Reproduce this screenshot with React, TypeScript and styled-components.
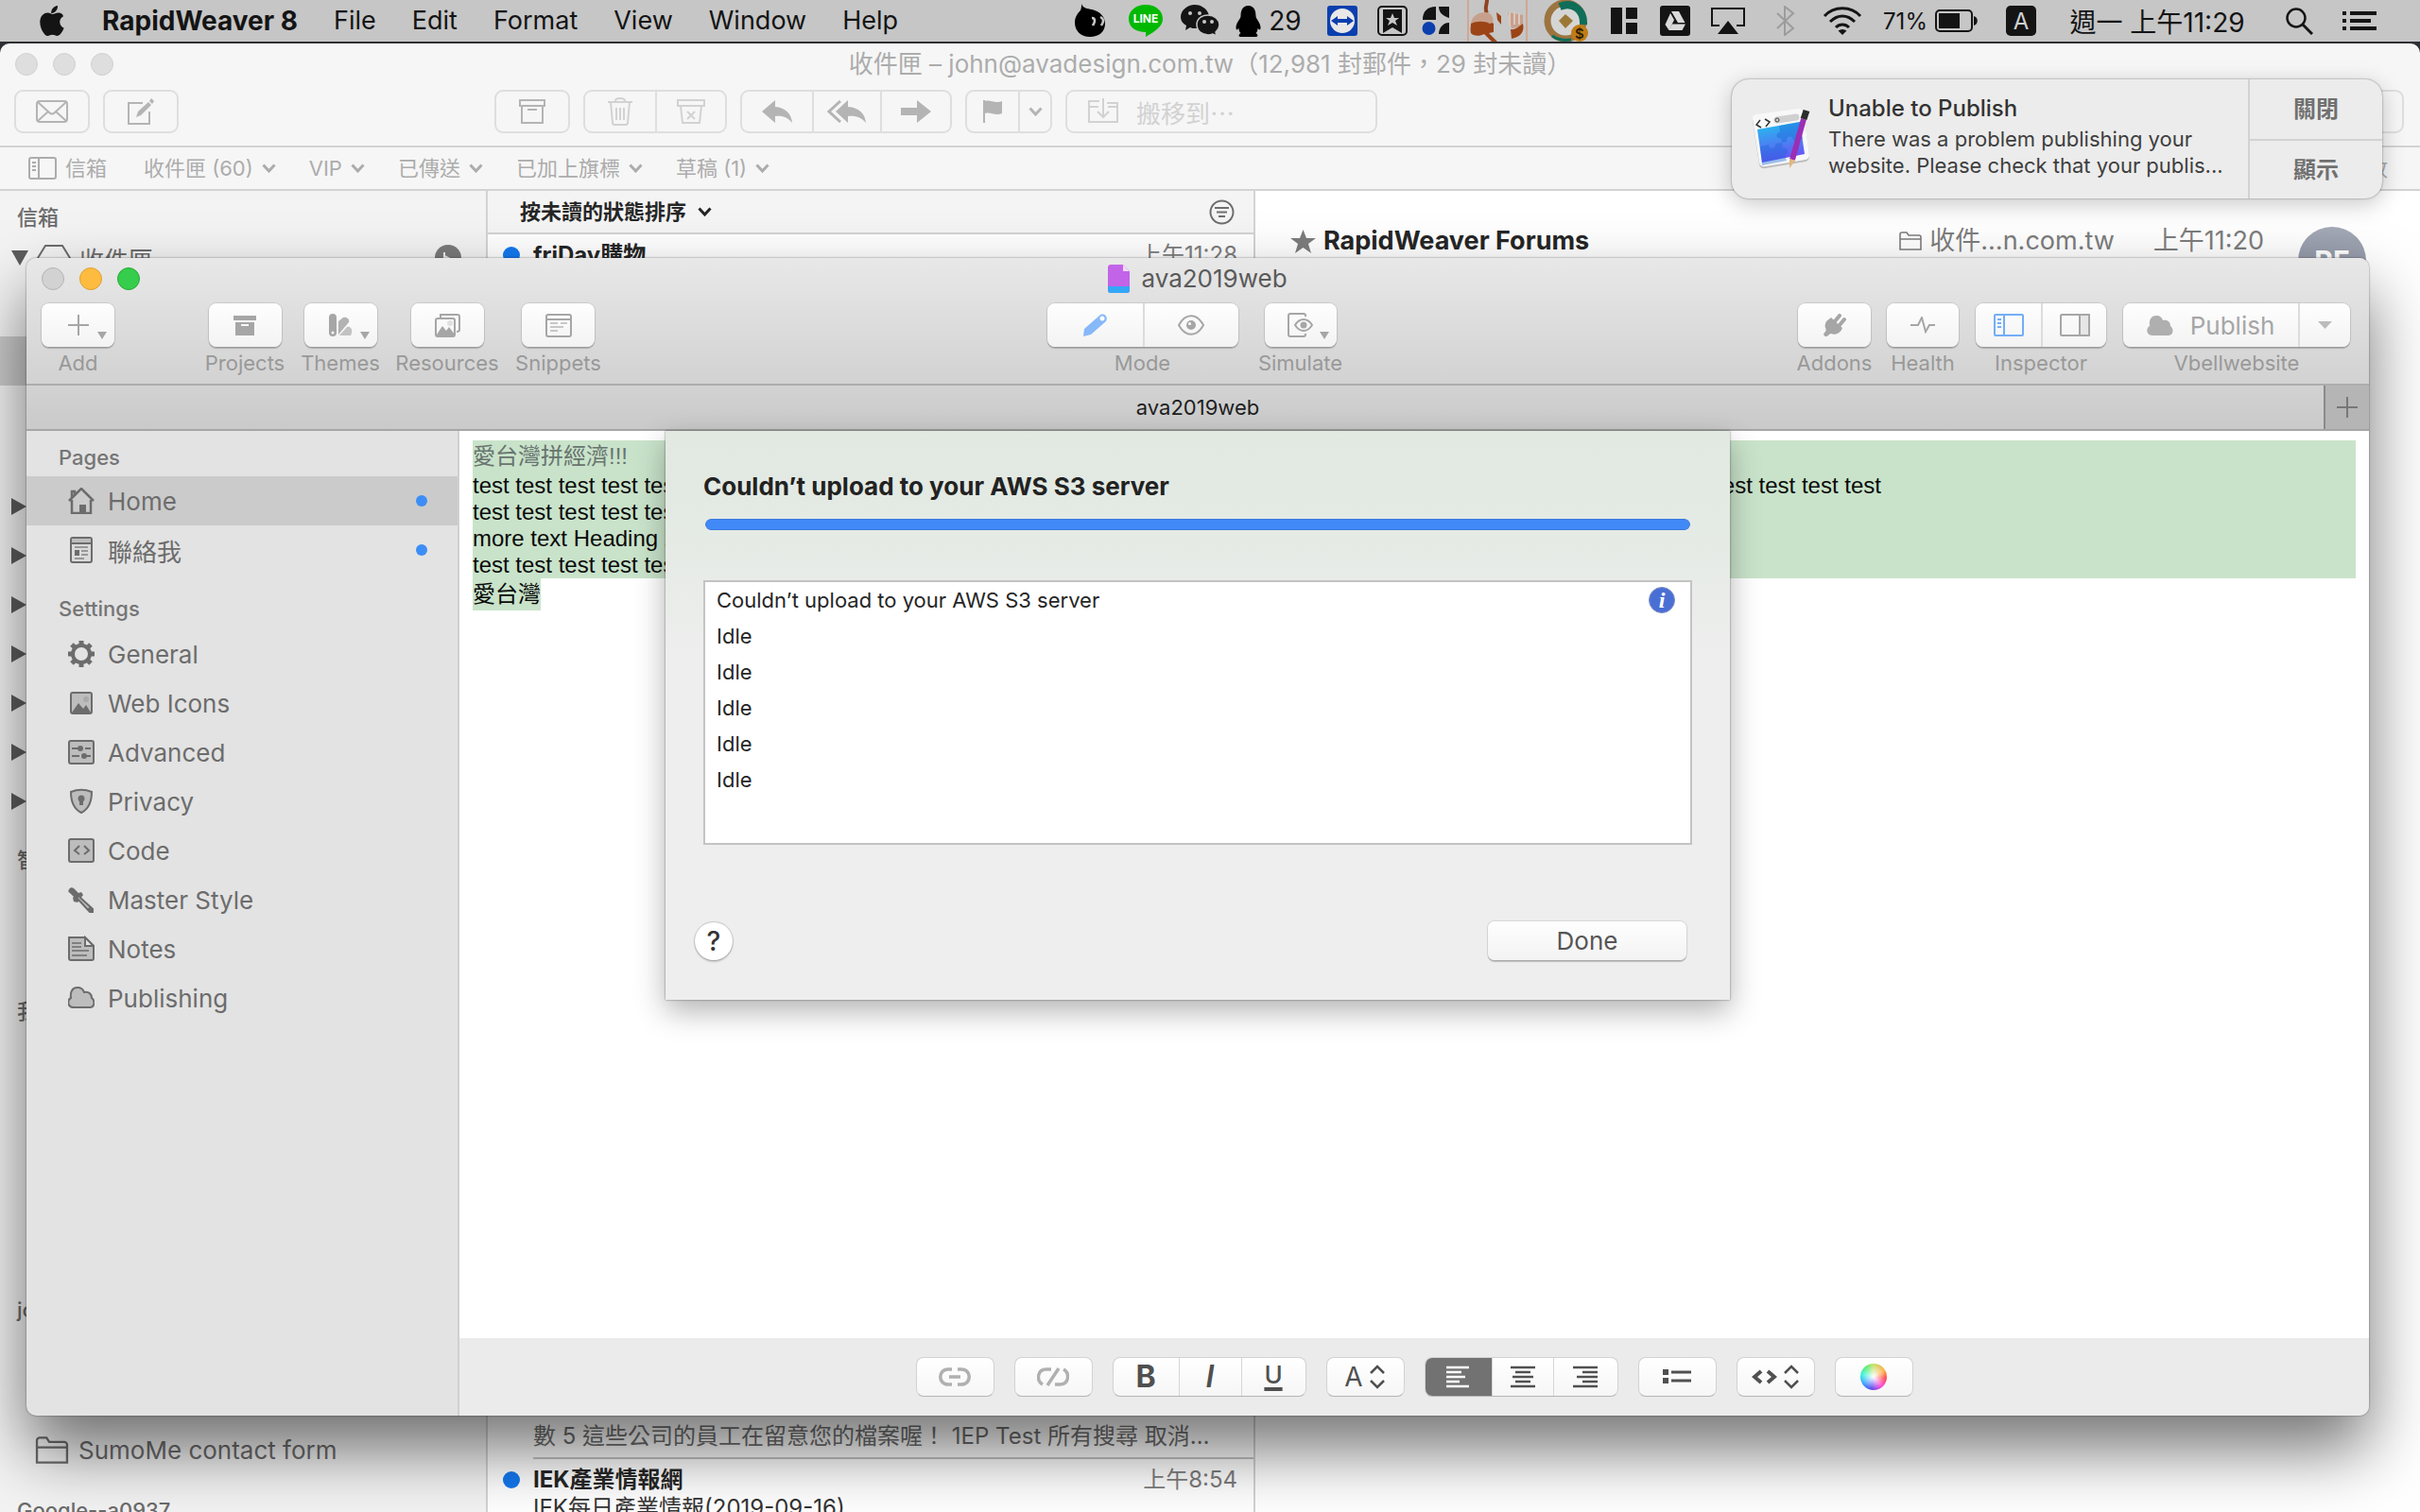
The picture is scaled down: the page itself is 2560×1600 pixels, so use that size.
import React from "react";
import styled, { createGlobalStyle, css } from "styled-components";

const ui = `Inter, "Noto Sans CJK TC", sans-serif`;

const GlobalStyle = createGlobalStyle`
  *, *::before, *::after { box-sizing: border-box; }
  body { margin: 0; font-family: ${ui}; overflow: hidden; background: #2e2f33; }
  button, input { font-family: inherit; margin: 0; }
  button { padding: 0; border: 0; background: none; color: inherit; }
  h1, h2, h3, p, ul { margin: 0; padding: 0; font-weight: inherit; font-size: inherit; }
  ul { list-style: none; }
  svg { display: block; flex: none; }
`;

/* ---------- Desktop and menu bar ---------- */

const Desktop = styled.div`
  position: relative;
  height: 100vh;
  overflow: hidden;
  display: flex;
  flex-direction: column;
  gap: 2px;
  background: #2e2f33;
  white-space: nowrap;
`;

const MenuBar = styled.header`
  flex: none;
  height: 44px;
  display: flex;
  align-items: center;
  padding: 0 36px 0 42px;
  background: #c6c6c6;
  color: #141414;
`;

const Menus = styled.nav`
  display: flex;
  align-items: center;
  gap: 38px;
`;

const MenuTitle = styled.button<{ $strong?: boolean }>`
  font-size: ${(p) => (p.$strong ? 28 : 27)}px;
  line-height: 44px;
  font-weight: ${(p) => (p.$strong ? 700 : 400)};
`;

const Status = styled.div`
  display: flex;
  align-items: center;
  margin-left: auto;
`;

const StatusItem = styled.button<{ $w: number }>`
  width: ${(p) => p.$w}px;
  height: 44px;
  display: flex;
  align-items: center;
  justify-content: center;
  gap: 8px;
  font-size: 28px;
`;

const Small = styled.span`
  font-size: 24px;
`;

/* ---------- Mail window ---------- */

const MailWindow = styled.main`
  flex: 1;
  min-height: 0;
  display: flex;
  flex-direction: column;
  background: #f6f6f6;
  border-radius: 10px 10px 0 0;
  overflow: hidden;
`;

const TitleRow = styled.div`
  flex: none;
  height: 44px;
  display: grid;
  grid-template-columns: 1fr auto 1fr;
  align-items: center;
  padding: 0 16px;
`;

const Lights = styled.div`
  display: flex;
  gap: 16px;
`;

const Light = styled.button<{ $fill: string; $edge: string }>`
  width: 24px;
  height: 24px;
  border-radius: 50%;
  background: ${(p) => p.$fill};
  border: 1px solid ${(p) => p.$edge};
`;

const WindowTitle = styled.h1<{ $dim?: boolean }>`
  display: flex;
  align-items: center;
  gap: 12px;
  font-size: 26px;
  line-height: 32px;
  color: ${(p) => (p.$dim ? "#acacac" : "#5a5a5a")};
`;

const MailToolbar = styled.div`
  flex: none;
  display: flex;
  gap: 14px;
  padding: 5px 17px 13px 15px;
  border-bottom: 2px solid #d3d3d3;
`;

const MailGroup = styled.div<{ $push?: boolean }>`
  display: flex;
  height: 46px;
  margin-left: ${(p) => (p.$push ? "320px" : "0")};
  border: 2px solid #dedede;
  border-radius: 9px;
  color: #b4b4b4;
`;

const MailButton = styled.button<{ $w: number; $faint?: boolean; $start?: boolean }>`
  width: ${(p) => p.$w}px;
  display: flex;
  align-items: center;
  justify-content: ${(p) => (p.$start ? "flex-start" : "center")};
  gap: 19px;
  padding: ${(p) => (p.$start ? "0 22px" : "0")};
  color: ${(p) => (p.$faint ? "#d2d2d2" : "#b4b4b4")};
  font-size: 26px;
  & + & { border-left: 2px solid #dedede; }
`;

const MailSearch = styled.input`
  width: 400px;
  height: 46px;
  margin-left: auto;
  border: 2px solid #dedede;
  border-radius: 9px;
  background: transparent;
`;

const FavBar = styled.nav`
  flex: none;
  height: 46px;
  display: flex;
  align-items: center;
  gap: 35px;
  padding: 0 34px 0 30px;
  border-bottom: 2px solid #d3d3d3;
`;

const Fav = styled.button<{ $end?: boolean; $first?: boolean }>`
  display: flex;
  align-items: center;
  gap: 9px;
  margin-left: ${(p) => (p.$end ? "auto" : "0")};
  margin-right: ${(p) => (p.$first ? "4px" : "0")};
  color: #acacac;
  font-size: 22px;
  line-height: 30px;
`;

const MailBody = styled.div`
  flex: 1;
  min-height: 0;
  display: grid;
  grid-template-columns: 516px 812px 1fr;
`;

const MailSide = styled.aside`
  border-right: 2px solid #d3d3d3;
  background: #f3f3f3;
  color: #6c6c6c;
  overflow: hidden;
`;

const SideHead = styled.h2`
  height: 45px;
  padding: 12px 18px 0;
  font-size: 22px;
  line-height: 32px;
  font-weight: 500;
`;

const SideRow = styled.div<{ $gap?: number; $on?: boolean; $pad?: number; $small?: boolean }>`
  height: 52px;
  margin-top: ${(p) => p.$gap || 0}px;
  padding: 0 26px 0 ${(p) => (p.$pad === undefined ? 12 : p.$pad)}px;
  display: flex;
  align-items: center;
  gap: 9px;
  font-size: ${(p) => (p.$small ? 22 : 26)}px;
  font-weight: ${(p) => (p.$small ? 500 : 400)};
  background: ${(p) => (p.$on ? "#cbcbcb" : "transparent")};
`;

const Badge = styled.span`
  width: 28px;
  height: 28px;
  margin-left: auto;
  border-radius: 50%;
  display: grid;
  place-items: center;
  background: #7a7a7a;
`;

const MailList = styled.section`
  display: flex;
  flex-direction: column;
  border-right: 2px solid #d3d3d3;
  background: #fff;
  color: #6e6e6e;
  overflow: hidden;
`;

const ListHead = styled.div`
  flex: none;
  height: 46px;
  display: flex;
  align-items: center;
  justify-content: space-between;
  padding: 0 20px 0 34px;
  background: #f4f4f4;
  border-bottom: 2px solid #d3d3d3;
`;

const SortButton = styled.button`
  display: flex;
  align-items: center;
  gap: 12px;
  color: #262626;
  font-size: 22px;
  line-height: 32px;
  font-weight: 600;
`;

const Message = styled.article<{ $gap?: number }>`
  margin-top: ${(p) => p.$gap || 0}px;
  display: grid;
  grid-template-columns: 32px 1fr;
  align-items: center;
  padding-left: 16px;
  font-size: 24px;
  line-height: 30px;
`;

const Preview = styled.p`
  grid-column: 2;
  height: 40px;
  padding-right: 30px;
  line-height: 32px;
  overflow: hidden;
  text-overflow: ellipsis;
  border-bottom: 2px solid #c4c4c4;
`;

const Subject = styled.p`
  grid-column: 2;
  color: #333;
`;

const Sender = styled.h3`
  display: flex;
  justify-content: space-between;
  padding-right: 17px;
  color: #262626;
  font-weight: 700;
`;

const When = styled.time`
  color: #7d7d7d;
  font-weight: 400;
`;

const Unread = styled.i<{ $size: number }>`
  width: ${(p) => p.$size}px;
  height: ${(p) => p.$size}px;
  border-radius: 50%;
  background: #1478f0;
`;

const Reader = styled.section`
  background: #fff;
  overflow: hidden;
`;

const ReaderHead = styled.div`
  display: flex;
  align-items: flex-start;
  padding: 36px 57px 0 37px;
  color: #7d7d7d;
  font-size: 27px;
  line-height: 34px;
`;

const ReaderFrom = styled.h2`
  display: flex;
  align-items: center;
  gap: 8px;
  flex: 1;
  font-weight: 700;
`;

const FromName = styled.span`
  color: #262626;
`;

const ReaderBox = styled.span`
  display: flex;
  align-items: center;
  gap: 8px;
  margin-right: 41px;
`;

const Avatar = styled.span`
  width: 72px;
  height: 72px;
  margin: 2px 0 0 36px;
  border-radius: 50%;
  display: grid;
  place-items: center;
  background: linear-gradient(#a3a9b6, #858a9b);
  color: #fff;
  font-size: 30px;
  font-weight: 700;
`;

/* ---------- RapidWeaver window ---------- */

const AppWindow = styled.section`
  position: absolute;
  left: 28px;
  right: 54px;
  top: 273px;
  bottom: 102px;
  display: flex;
  flex-direction: column;
  border-radius: 10px;
  background: #e3e3e3;
  box-shadow: 0 0 2px rgba(0, 0, 0, 0.55), 0 36px 70px rgba(0, 0, 0, 0.55);
`;

const AppHead = styled.header`
  flex: none;
  border-radius: 10px 10px 0 0;
  border-bottom: 2px solid #adadad;
  background: linear-gradient(#e8e8e8, #d2d2d2);
`;

const Toolbar = styled.div`
  display: grid;
  grid-template-columns: 1fr auto 1fr;
  padding: 4px 20px 9px 16px;
  color: #999;
`;

const ToolSet = styled.div<{ $end?: boolean }>`
  display: flex;
  gap: 17px;
  justify-content: ${(p) => (p.$end ? "flex-end" : "flex-start")};
`;

const Tool = styled.div<{ $w: number; $after?: number }>`
  width: ${(p) => p.$w}px;
  margin-right: ${(p) => p.$after || 0}px;
  display: flex;
  flex-direction: column;
  align-items: center;
  gap: 4px;
  font-size: 22px;
  line-height: 26px;
`;

const face = css`
  background: linear-gradient(#fefefe, #f3f3f3);
  box-shadow: 0 0 1px 1px rgba(0, 0, 0, 0.1), 0 2px 1px rgba(0, 0, 0, 0.2);
`;

const Face = styled.div`
  display: flex;
  height: 46px;
  border-radius: 8px;
  ${face}
`;

const FaceButton = styled.button<{ $w: number }>`
  position: relative;
  width: ${(p) => p.$w}px;
  display: flex;
  align-items: center;
  justify-content: center;
  gap: 18px;
  color: #a6a6a6;
  font-size: 26px;
  & + & { border-left: 2px solid #dcdcdc; }
`;

const MenuMark = styled.span`
  position: absolute;
  right: 8px;
  bottom: 8px;
`;

const TabBar = styled.div`
  flex: none;
  height: 48px;
  display: flex;
  border-bottom: 2px solid #a6a6a6;
  background: linear-gradient(#d2d2d2, #cacaca);
`;

const Tab = styled.button`
  flex: 1;
  padding-left: 48px;
  color: #1e1e1e;
  font-size: 22px;
`;

const NewTab = styled.button`
  width: 48px;
  display: grid;
  place-items: center;
  border-left: 2px solid #8a8a8a;
  background: #b5b5b5;
  color: #777;
`;

const AppBody = styled.div`
  flex: 1;
  min-height: 0;
  display: grid;
  grid-template-columns: 458px 1fr;
`;

const Sidebar = styled.nav`
  border-right: 2px solid #d0d0d0;
  border-radius: 0 0 0 10px;
  color: #6c6c6c;
`;

const Heading = styled.h2<{ $next?: boolean }>`
  height: ${(p) => (p.$next ? 58 : 48)}px;
  padding: ${(p) => (p.$next ? 20 : 12)}px 34px 0;
  font-size: 22px;
  line-height: 32px;
  font-weight: 500;
  color: #757575;
`;

const Item = styled.button<{ $on?: boolean }>`
  width: 100%;
  height: 52px;
  padding: 0 32px 0 44px;
  display: grid;
  grid-template-columns: 28px 1fr 12px;
  align-items: center;
  gap: 14px;
  text-align: left;
  font-size: 26px;
  background: ${(p) => (p.$on ? "#cbcbcb" : "transparent")};
`;

const Changed = styled.i`
  width: 12px;
  height: 12px;
  border-radius: 50%;
  background: #3d8df7;
`;

const EditorPane = styled.div`
  min-width: 0;
  min-height: 0;
  display: flex;
  flex-direction: column;
`;

const Editor = styled.div`
  flex: 1;
  min-height: 0;
  padding: 10px 14px 0;
  background: #fff;
  overflow: hidden;
  color: #0a0a0a;
  font-family: "Liberation Sans", "Noto Sans CJK TC", sans-serif;
  font-size: 24px;
  line-height: 28px;
`;

const Selected = styled.div`
  background: #c9e3ca;
`;

const Banner = styled.p`
  color: #68746f;
  line-height: 34px;
`;

const LastLine = styled.span`
  display: inline-block;
  background: #c9e3ca;
  line-height: 34px;
`;

const FormatBar = styled.div`
  flex: none;
  height: 82px;
  display: flex;
  align-items: center;
  justify-content: center;
  gap: 21px;
  background: #ebebeb;
  border-radius: 0 0 10px 0;
`;

const FormatGroup = styled.div`
  display: flex;
  height: 42px;
  border-radius: 8px;
  overflow: hidden;
  border: 1px solid #d2d2d2;
  border-bottom-color: #b4b4b4;
  background: linear-gradient(#fff, #f6f6f6);
`;

const FormatButton = styled.button<{ $w: number; $on?: boolean; $faint?: boolean }>`
  width: ${(p) => p.$w}px;
  display: flex;
  align-items: center;
  justify-content: center;
  gap: 6px;
  color: ${(p) => (p.$on ? "#fff" : p.$faint ? "#b0b0b0" : "#505050")};
  background: ${(p) => (p.$on ? "#727272" : "transparent")};
  font-size: 28px;
  line-height: 40px;
  & + & { border-left: 1px solid #d6d6d6; }
`;

const Bold = styled.b`
  font-weight: 700;
  font-size: 32px;
`;
const Slant = styled.i`
  font-weight: 600;
  font-size: 32px;
`;
const Under = styled.u`
  font-weight: 500;
  text-decoration-thickness: 4px;
  text-underline-offset: 4px;
  font-size: 26px;
  line-height: 36px;
  align-self: flex-start;
`;

const ColorWheel = styled.span`
  width: 28px;
  height: 28px;
  border-radius: 50%;
  background: radial-gradient(circle, #fff, rgba(255, 255, 255, 0) 65%),
    conic-gradient(#c8e06a, #ffb04a 60deg, #ff4a4a 95deg, #ff4ad8 140deg, #5a4af0 190deg, #3aa0ff 235deg, #3af0e0 280deg, #5af07a 320deg, #c8e06a);
`;

/* ---------- Publishing sheet ---------- */

const Sheet = styled.section`
  position: absolute;
  left: 50%;
  top: 183px;
  width: 1126px;
  height: 602px;
  transform: translateX(-50%);
  display: flex;
  flex-direction: column;
  padding: 42px 40px 42px;
  background: linear-gradient(#e1e9e1, #e4eae4 100px, #eeeeee 240px, #eeeeee);
  box-shadow: 0 0 2px rgba(0, 0, 0, 0.5), 0 12px 30px rgba(0, 0, 0, 0.3);
`;

const SheetTitle = styled.h2`
  font-size: 26px;
  line-height: 34px;
  font-weight: 700;
  color: #222;
`;

const Progress = styled.progress`
  appearance: none;
  display: block;
  width: calc(100% - 4px);
  height: 12px;
  margin: 17px 2px 53px;
  border: 0;
  border-radius: 6px;
  overflow: hidden;
  &::-webkit-progress-bar { background: #ddd; }
  &::-webkit-progress-value { background: #4089f7; border-radius: 6px; border: 1px solid #3a7ade; }
`;

const Log = styled.ul`
  height: 280px;
  border: 2px solid #c3c3c3;
  background: #fff;
  padding: 0 16px 0 12px;
  color: #262626;
  font-size: 22px;
`;

const LogRow = styled.li`
  height: 38px;
  display: flex;
  align-items: center;
  justify-content: space-between;
`;

const InfoButton = styled.button`
  width: 28px;
  height: 28px;
  border-radius: 50%;
  background: #4a6fd4;
  border: 1px solid #7f90c4;
  color: #fff;
  font-family: "Liberation Serif", serif;
  font-style: italic;
  font-weight: 700;
  font-size: 24px;
  line-height: 24px;
`;

const SheetFoot = styled.div`
  display: flex;
  justify-content: space-between;
  align-items: center;
  margin: auto 6px 0 -9px;
`;

const Help = styled.button`
  width: 40px;
  height: 40px;
  border-radius: 50%;
  background: #fff;
  color: #333;
  font-size: 28px;
  font-weight: 500;
  box-shadow: 0 0 1px 1px rgba(0, 0, 0, 0.16), 0 2px 2px rgba(0, 0, 0, 0.16);
`;

const Done = styled.button`
  width: 210px;
  height: 41px;
  border-radius: 7px;
  ${face}
  color: #555;
  font-size: 26px;
`;

/* ---------- Notification ---------- */

const Notice = styled.aside`
  position: absolute;
  top: 84px;
  right: 40px;
  width: 688px;
  height: 126px;
  display: grid;
  grid-template-columns: 1fr 142px;
  border-radius: 18px;
  background: #ececec;
  box-shadow: 0 0 2px rgba(0, 0, 0, 0.5), 0 6px 24px rgba(0, 0, 0, 0.22);
`;

const NoticeMain = styled.div`
  display: flex;
  align-items: center;
  gap: 18px;
  padding-left: 20px;
  min-width: 0;
`;

const NoticeText = styled.div`
  padding-bottom: 8px;
  color: #3e3e3e;
  font-size: 22px;
  line-height: 28px;
`;

const NoticeTitle = styled.h2`
  font-size: 24px;
  line-height: 36px;
  font-weight: 500;
  color: #333;
`;

const NoticeActions = styled.div`
  display: grid;
  grid-template-rows: 1fr 1fr;
  border-left: 2px solid #d2d2d2;
`;

const NoticeButton = styled.button`
  padding-bottom: 4px;
  color: #707070;
  font-size: 24px;
  font-weight: 600;
  & + & { border-top: 2px solid #d2d2d2; }
`;

/* ---------- Drawings ---------- */

type IcoProps = { w: number; h: number; vb?: string; children: React.ReactNode };
const Ico = ({ w, h, vb, children }: IcoProps) => (
  <svg width={w} height={h} viewBox={vb || `0 0 ${w} ${h}`} fill="none" stroke="currentColor" strokeWidth={2} aria-hidden="true">
    {children}
  </svg>
);
const solid = { fill: "currentColor", stroke: "none" };

const Chevron = () => (
  <Ico w={15} h={10}>
    <path d="M1.500 1.500 7.500 8l6-6.500" strokeWidth={3} />
  </Ico>
);
const Down = () => (
  <MenuMark>
    <Ico w={10} h={8}>
      <path d="M0 0h10L5 8z" {...solid} />
    </Ico>
  </MenuMark>
);
const Closed = () => (
  <Ico w={16} h={18}>
    <path d="M0 0l16 9-16 9z" {...solid} fill="#5c5c5c" />
  </Ico>
);
const UpDown = () => (
  <Ico w={18} h={26}>
    <path d="M2 9l7-7 7 7M2 17l7 7 7-7" strokeWidth={2.500} />
  </Ico>
);

const Apple = () => (
  <Ico w={28} h={32} vb="0 0 26 32">
    <path {...solid} d="M18 0c.3 2.200-.6 4.200-1.800 5.600-1.200 1.400-3.100 2.500-5 2.300-.3-2.100.7-4.200 1.900-5.500C14.400 1 16.400.1 18 0zM24 11.200c-.3.200-3.700 2-3.700 6 0 4.700 4.200 6.300 4.300 6.300 0 .1-.7 2.400-2.200 4.600C21 30 19.600 32 17.500 32s-2.700-1.200-5-1.200c-2.400 0-3.200 1.200-5.100 1.200s-3.300-1.800-4.900-4.100C.7 25.200-.7 21.100-.7 17.200c0-6.300 4.200-9.600 8.200-9.600 2.200 0 4 1.400 5.300 1.400 1.300 0 3.400-1.500 5.900-1.500 1 0 4.300.1 5.300 3.700z" />
  </Ico>
);

const Flame = () => (
  <Ico w={34} h={36}>
    <path {...solid} fill="#000" d="M8 0c2 5 6 5 11 6 9 2 14 8 14 15 0 9-7 14-16 14S1 29 1 20C1 14 4 10 7 7 8 5 8 2 8 0z" />
    <path d="M19 15c2 0 3 1 3 3s-1 3-2 5M28 14c2 1 3 2 3 4s-1 3-2 5" stroke="#c6c6c6" strokeWidth={2.500} />
  </Ico>
);
const Line = () => (
  <Ico w={36} h={34}>
    <path {...solid} fill="#00b900" d="M18 0c10 0 18 6 18 15 0 8-8 13-18 19v-5C8 29 0 24 0 15 0 6 8 0 18 0z" />
    <text x="18" y="19" textAnchor="middle" fontSize="12" fontWeight="700" fontFamily={ui} fill="#fff" stroke="none">LINE</text>
  </Ico>
);
const WeChat = () => (
  <Ico w={42} h={34}>
    <path {...solid} d="M15 0c8 0 15 6 15 13S23 25 15 25c-2 0-3 0-5-1l-5 3 1-5C2 20 0 17 0 13 0 6 7 0 15 0z" />
    <path {...solid} stroke="#c6c6c6" strokeWidth={1.500} d="M29 11c7 0 12 5 12 10 0 3-2 6-4 8l1 4-4-2c-2 1-3 1-5 1-7 0-12-5-12-11s5-10 12-10z" />
    <g fill="#c6c6c6" stroke="none"><circle cx="10" cy="9" r="2" /><circle cx="20" cy="9" r="2" /><circle cx="25" cy="18" r="2" /><circle cx="33" cy="18" r="2" /></g>
  </Ico>
);
const Penguin = () => (
  <Ico w={27} h={33}>
    <path {...solid} fill="#000" d="M13.500 0c6 0 8 5 8 11 0 3 5 7 5 12 0 3-1 3-3 1 0 3-1 4-2 5 2 1 3 4 0 4h-16c-3 0-2-3 0-4-1-1-2-2-2-5-2 2-3 2-3-1 0-5 5-9 5-12 0-6 2-11 8-11z" />
  </Ico>
);
const TeamViewer = () => (
  <Ico w={32} h={32}>
    <rect width="32" height="32" rx="3" {...solid} fill="#0b3fae" />
    <circle cx="16" cy="16" r="13" {...solid} fill="#e8e8e8" />
    <path {...solid} fill="#0b3fae" d="M4 16l7-5v3h10v-3l7 5-7 5v-3H11v3z" />
  </Ico>
);
const Bookmark = () => (
  <Ico w={32} h={32}>
    <rect x="1" y="1" width="30" height="30" rx="4" />
    <path {...solid} d="M6 4h20v25l-10-6-10 6z" />
    <path {...solid} fill="#c6c6c6" d="M16 8l2 5h5l-4 3 2 5-5-3-5 3 2-5-4-3h5z" />
  </Ico>
);
const Blocks = () => (
  <Ico w={30} h={32}>
    <path {...solid} d="M1 15C1 6 6 1 15 1v14zM18 1h11v12C23 11 18 8 18 1zM29 18v12H18c0-7 5-12 11-12z" />
    <circle cx="7.500" cy="24" r="7" {...solid} fill="#0b3fae" />
  </Ico>
);
const Bronze = () => (
  <Ico w={64} h={44}>
    <path d="M1 0v44M63 0v44" stroke="#cfa795" />
    <path d="M21 0c0 5-3 9 0 14" stroke="#8f4420" strokeWidth={4} />
    <path {...solid} fill="#c7a08c" d="M4 26c0-9 8-13 15-13 6 0 10 5 8 12L5 27zM43 13l16 3v12l-12 2z" />
    <path {...solid} fill="#9c4416" d="M4 25c6-3 15-3 20 0 2-1 3-1 4 0v9l-5 1 9 9h-6l-8-8c-5 3-12 2-14-1-1-4 0-7 0-10zM31 13l5 4v9l-4-5zM46 31c5 1 10-4 13-6 2 8-2 14-12 16z" />
    <path d="M45 13v15M50 12v14M55 14v12" stroke="#dbc7bd" />
  </Ico>
);
const Coin = () => (
  <Ico w={48} h={44}>
    <circle cx="23" cy="22" r="19" fill="#d5d5d5" stroke="#9b7440" strokeWidth={7} />
    <path d="M17 7c14-6 26 4 25 19" stroke="#0f6e58" strokeWidth={8} />
    <path d="M9 38c7 5 13 5 20 4" stroke="#0f6e58" strokeWidth={3} />
    <path {...solid} fill="#9b7836" d="M23 15l8 7-8 8-7-8z" />
    <circle cx="38" cy="35" r="9" {...solid} fill="#c17c15" />
    <text x="38" y="41" textAnchor="middle" fontSize="15" fontWeight="600" fontFamily={ui} fill="#2b2108" stroke="none">$</text>
  </Ico>
);
const Tiles = () => (
  <Ico w={28} h={28}>
    <path {...solid} d="M0 0h12v28H0zM16 0h12v12H16zM16 16h12v12H16z" />
  </Ico>
);
const Drive = () => (
  <Ico w={32} h={32}>
    <rect width="32" height="32" rx="3" {...solid} />
    <path {...solid} fill="#d8d8d8" d="M12 6h8l6.500 12h-7.500zM11 8l4 7-5.500 11-4-6zM13 19.500h14L23.500 26h-14z" />
  </Ico>
);
const AirPlay = () => (
  <Ico w={36} h={28}>
    <path d="M9 19H1V1h34v18h-8" />
    <path {...solid} d="M18 14l11 14H7z" />
  </Ico>
);
const Bluetooth = () => (
  <Ico w={20} h={32}>
    <path d="M1 8l17 16-9 7V1l9 7L1 24" stroke="#9c9c9c" />
  </Ico>
);
const Wifi = () => (
  <Ico w={42} h={30}>
    <path d="M2 10c10-11 28-11 38 0M8 16c8-8 18-8 26 0M14 22c4-4 10-4 14 0" strokeWidth={3} />
    <path {...solid} d="M16.500 25.500c3-2 6-2 9 0L21 30z" />
  </Ico>
);
const Battery = () => (
  <Ico w={45} h={24}>
    <rect x="1" y="1" width="38" height="22" rx="4" />
    <rect x="4" y="4" width="22" height="16" {...solid} />
    <path {...solid} d="M41 7c5 1 5 9 0 10z" />
  </Ico>
);
const InputSource = () => (
  <Ico w={32} h={32}>
    <rect width="32" height="32" rx="5" {...solid} />
    <text x="16" y="25" textAnchor="middle" fontSize="24" fontFamily={ui} fill="#d0d0d0" stroke="none">A</text>
  </Ico>
);
const Search = () => (
  <Ico w={29} h={29}>
    <circle cx="11" cy="11" r="9.500" strokeWidth={2.500} />
    <path d="M18 18l10 10" strokeWidth={3} />
  </Ico>
);
const ListMenu = () => (
  <Ico w={36} h={20}>
    <path d="M0 2h4M0 10h4M0 18h4M8 2h28M8 10h22M8 18h28" strokeWidth={4} />
  </Ico>
);

const Envelope = () => (
  <Ico w={34} h={24}>
    <rect x="1" y="1" width="32" height="22" rx="3" />
    <path d="M2 2l12 11c2 2 4 2 6 0L32 2M2 22l11-10M32 22L21 12" />
  </Ico>
);
const Compose = () => (
  <Ico w={30} h={28}>
    <path d="M17 5H2v22h22V14" />
    <path {...solid} d="M10 20l2-6L23 4l3 3-11 11zM24 3l2-3 3 3-2 3z" />
  </Ico>
);
const Archive = () => (
  <Ico w={28} h={26}>
    <path d="M1 1h26v6H1zM3 7v18h22V7M9 11h10" />
  </Ico>
);
const Trash = () => (
  <Ico w={26} h={30}>
    <path d="M0 5h26M3 5l2 22c0 1 1 2 2 2h12c1 0 2-1 2-2l2-22M8 4c0-4 10-4 10 0M9 11v13M13 11v13M17 11v13" />
  </Ico>
);
const Junk = () => (
  <Ico w={30} h={26}>
    <path d="M1 1h28v6H1zM4 7l2 18h18l2-18M11 13l8 8M19 13l-8 8" />
  </Ico>
);
const Reply = () => (
  <Ico w={32} h={24}>
    <path {...solid} d="M0 12L14 0v7c11 1 17 7 18 17-5-6-10-8-18-7v7z" />
  </Ico>
);
const ReplyAll = () => (
  <Ico w={42} h={24}>
    <path {...solid} d="M9 12L22 0v7c12 1 18 7 19 17-5-6-11-8-19-7v7z" />
    <path d="M14 1L2 12l12 11" strokeWidth={3} />
  </Ico>
);
const Forward = () => (
  <Ico w={32} h={24}>
    <path {...solid} d="M0 8h17V0l15 12-15 12v-8H0z" />
  </Ico>
);
const Flag = () => (
  <Ico w={20} h={24}>
    <path {...solid} d="M0 0h2v1c6-2 10 3 18 0v13c-8 3-12-2-18 0v10H0z" />
  </Ico>
);
const MoveTo = () => (
  <Ico w={32} h={28}>
    <path d="M12 3H1v22h30V5H20M1 9h10M21 9h10M16 0v20M10 14l6 6 6-6" />
  </Ico>
);
const Panels = () => (
  <Ico w={30} h={24}>
    <rect x="1" y="1" width="28" height="22" rx="2" />
    <path d="M11 1v22M4 6h4M4 10h4M4 14h4" />
  </Ico>
);
const Filter = () => (
  <Ico w={27} h={27}>
    <circle cx="13.500" cy="13.500" r="12" />
    <path d="M6 9h15M8 13.500h11M10 18h7" />
  </Ico>
);
const Inbox = () => (
  <Ico w={36} h={28}>
    <path d="M1 14L9 1h18l8 13v12H1z" />
  </Ico>
);
const Folder = ({ w = 24, h = 20 }: { w?: number; h?: number }) => (
  <Ico w={w} h={h} vb="0 0 24 20">
    <path d="M1 19V3c0-1 1-2 2-2h5l2 3h11c1 0 2 1 2 2v13zM1 8h22" strokeWidth={1.600} />
  </Ico>
);
const Star = () => (
  <Ico w={27} h={25}>
    <path {...solid} d="M13.500 0l3.500 9h10l-8 6 3 10-8.500-6L5 25l3-10-8-6h10z" />
  </Ico>
);

const AppIcon = () => (
  <Ico w={64} h={64}>
    <path {...solid} fill="#bdbdbd" d="M2 13Q1 8 6 7L50 1q5 0 6 4l6 45q0 5-4 6L16 63q-6 1-7-4z" />
    <path {...solid} fill="#f8f8f8" d="M2 11Q1 7 6 6L50 0q5 0 6 4l6 45q0 4-4 5L16 61q-6 1-7-4z" />
    <defs>
      <linearGradient id="page" x1="0" y1="0" x2="0.200" y2="1"><stop stopColor="#1fc4ee" /><stop offset="1" stopColor="#6a52f5" /></linearGradient>
    </defs>
    <path {...solid} fill="url(#page)" d="M7 22L52 14l5 34-45 9z" />
    <path {...solid} fill="#1767d8" opacity="0.400" d="M30 18l22-4 3 18-10 2c0-6-8-6-7 1l-5 1-1-5c-6 2-6-6-1-6zM10 40l9-2c0 6 8 5 7-1l7-1 1 6c6-2 7 5 2 7l2 6-26 5z" />
    <path d="M10 12l-4 5 5 3M15 11l5 3-4 5" stroke="#333" strokeWidth={1.500} />
    <path d="M28 12l20-3" stroke="#d0d0d0" strokeWidth={7} strokeLinecap="round" />
    <circle cx="28" cy="12" r="2" stroke="#444" strokeWidth={1} />
    <path d="M56 11L44 54" stroke="#9a2fb5" strokeWidth={6} />
    <path d="M59 2l-3 9" stroke="#2c2c2c" strokeWidth={7} />
    <path {...solid} fill="#e2b77d" d="M41 53l6 2-6 8z" />
  </Ico>
);

const DocIcon = () => (
  <Ico w={23} h={30}>
    <path {...solid} fill="#c264e8" d="M3 0h13l7 7v20c0 2-1 3-3 3H3c-2 0-3-1-3-3V3c0-2 1-3 3-3z" />
    <path {...solid} fill="#35a7f7" d="M0 23h23v4c0 2-1 3-3 3H3c-2 0-3-1-3-3z" />
    <path {...solid} fill="#efd9f7" d="M16 0l7 7h-7z" />
  </Ico>
);
const Plus = ({ s }: { s: number }) => (
  <Ico w={s} h={s} vb="0 0 22 22">
    <path d="M11 0v22M0 11h22" />
  </Ico>
);
const Box = () => (
  <Ico w={24} h={21}>
    <path {...solid} d="M0 0h24v5H0zM2 7h20v14H2z" />
    <path d="M8 10h8" stroke="#f8f8f8" />
  </Ico>
);
const Swatches = () => (
  <Ico w={26} h={24}>
    <rect x="1" y="0" width="8" height="24" rx="4" {...solid} />
    <path {...solid} opacity="0.850" d="M11 8l5-4c4-1 7 2 6 5L11 22z" />
    <path {...solid} opacity="0.650" d="M12 23l8-9c4-1 7 3 4 9z" />
    <circle cx="5" cy="20" r="1.500" {...solid} fill="#fff" />
  </Ico>
);
const Pictures = () => (
  <Ico w={27} h={25}>
    <path d="M6 4V1h18c1 0 2 1 2 2v14c0 1-1 2-3 2" />
    <rect x="1" y="5" width="20" height="19" rx="2" />
    <path {...solid} d="M2 22l6-9 4 5 3-4 6 8v2H2z" />
    <circle cx="16" cy="10" r="3" {...solid} opacity="0.300" />
  </Ico>
);
const Snippet = () => (
  <Ico w={28} h={25}>
    <rect x="1" y="1" width="26" height="23" rx="2" />
    <path d="M1 6h26" />
    <path d="M5 10h8M16 10h7M5 14h14M5 18h8" opacity="0.600" />
  </Ico>
);
const Pencil = () => (
  <Ico w={25} h={24}>
    <path {...solid} fill="#86b8fa" d="M0 24l1-8L17 2c4-4 10 1 7 6L8 22z" />
    <circle cx="20" cy="5" r="2.500" {...solid} fill="#fff" />
  </Ico>
);
const Eye = () => (
  <Ico w={28} h={22}>
    <path d="M1 11C8-2 20-2 27 11 20 24 8 24 1 11z" />
    <circle cx="14" cy="11" r="5" {...solid} />
    <circle cx="12.500" cy="9.500" r="1.500" {...solid} fill="#fff" />
  </Ico>
);
const PhoneEye = () => (
  <Ico w={27} h={26}>
    <path d="M19 4V3c0-1-1-2-2-2H3C2 1 1 2 1 3v20c0 1 1 2 2 2h14c1 0 2-1 2-2v-1" />
    <path d="M8 13c5-8 13-8 18 0-5 8-13 8-18 0z" />
    <circle cx="17" cy="13" r="3.500" {...solid} />
  </Ico>
);
const Plug = () => (
  <Ico w={25} h={25}>
    <path {...solid} d="M4 8l5-4 12 11c-2 6-8 8-12 6-2 0-3 3-5 3s-4-2-2-4 2-3 1-5 0-5 1-7z" />
    <path d="M13 8l5-6M18 12l5-6" strokeWidth={4} strokeLinecap="round" />
  </Ico>
);
const Pulse = () => (
  <Ico w={26} h={18}>
    <path d="M0 9h8l4-8 4 15 4-7h6" />
  </Ico>
);
const PanelLeft = () => (
  <Ico w={32} h={24}>
    <g stroke="#74aef8"><rect x="1" y="1" width="30" height="22" rx="1" /><path d="M11 1v22M4 6h4M4 10h4M4 14h4" /></g>
  </Ico>
);
const PanelRight = () => (
  <Ico w={32} h={24}>
    <rect x="21" y="1" width="10" height="22" fill="#e6e6e6" />
    <rect x="1" y="1" width="30" height="22" rx="1" />
  </Ico>
);
const cloudPath = "M6 22c-7 0-7-8-3-10C2 5 5 1 10 1c4 0 6 2 7 5 5-1 8 2 8 6 4 3 3 10-2 10z";
const CloudSolid = () => (
  <Ico w={28} h={23}>
    <path {...solid} d={cloudPath} opacity="0.900" />
  </Ico>
);

const fillSoft = "#bdbdbd";
const Home = () => (
  <Ico w={28} h={28}>
    <path d="M1 14L14 1l13 13M4 13v14h20V13M4 11V4h3v4" strokeWidth={2.500} />
    <path {...solid} d="M12 18h7v9h-7z" />
  </Ico>
);
const Page = () => (
  <Ico w={28} h={28}>
    <rect x="3" y="1" width="22" height="26" rx="2" fill="#dadada" />
    <path {...solid} fill={fillSoft} d="M4 2h20v5H4z" />
    <path d="M3 7h22" />
    <path d="M7 11h14M14 15h7M14 19h7M7 23h10" opacity="0.600" />
    <path {...solid} d="M7 14h5v6H7z" />
  </Ico>
);
const Gear = () => (
  <Ico w={28} h={28}>
    <circle cx="14" cy="14" r="9" strokeWidth={4} />
    <g strokeWidth={5}><path d="M14 0v5M14 23v5M0 14h5M23 14h5M4 4l4 4M20 20l4 4M4 24l4-4M20 8l4-4" /></g>
  </Ico>
);
const Photo = () => (
  <Ico w={28} h={28}>
    <rect x="3" y="3" width="22" height="22" rx="2" fill={fillSoft} />
    <path {...solid} d="M4 24l7-10 5 6 3-4 5 8z" />
    <circle cx="19" cy="10" r="3" {...solid} fill="#aaa" />
  </Ico>
);
const Sliders = () => (
  <Ico w={28} h={28}>
    <rect x="1" y="2" width="26" height="24" rx="2" fill={fillSoft} />
    <path d="M4 10h12M18 10h6M4 18h8M15 18h9" />
    <circle cx="13" cy="10" r="3" {...solid} /><circle cx="17" cy="18" r="3" {...solid} />
  </Ico>
);
const Shield = () => (
  <Ico w={28} h={28}>
    <path d="M3 4c7-3 15-3 22 0 0 11-3 18-11 22C6 22 3 15 3 4z" fill={fillSoft} />
    <circle cx="14" cy="11" r="3.500" {...solid} />
    <path {...solid} d="M12 12h4v6h-4z" />
  </Ico>
);
const Brackets = () => (
  <Ico w={28} h={28}>
    <rect x="1" y="2" width="26" height="24" rx="2" fill={fillSoft} />
    <path d="M12 9l-5 5 5 4M17 9l5 5-5 4" />
  </Ico>
);
const Dropper = () => (
  <Ico w={28} h={28}>
    <path {...solid} d="M1 3c2-3 5-2 7 1l3 3 3-1 2 3-6 8-4-1-1-4 1-1-4-4C0 6 0 5 1 3z" />
    <path d="M12 11l14 13v3h-3L10 13" fill={fillSoft} />
    <path {...solid} d="M20 24l4-3 3 3v3h-4z" />
  </Ico>
);
const Note = () => (
  <Ico w={28} h={28}>
    <path d="M1 2h17l9 9v13c0 1-1 2-2 2H3c-1 0-2-1-2-2z" fill={fillSoft} />
    <path d="M18 2v9h9z" fill="#e3e3e3" />
    <path d="M4 8h10M4 12h10M4 16h18M4 21h16" strokeWidth={1.500} />
  </Ico>
);
const Cloud = () => (
  <Ico w={28} h={24}>
    <path d={cloudPath} fill={fillSoft} />
  </Ico>
);

const Link = ({ cut }: { cut?: boolean }) => (
  <Ico w={34} h={20}>
    {cut ? (
      <path d="M15 2h-5C0 2-1 14 6 18M19 18h5c10 0 11-12 4-16M11 19L23 1" strokeWidth={3.500} />
    ) : (
      <path d="M14 2h-4C-1 2-1 18 10 18h4M20 2h4c11 0 11 16 0 16h-4M11 10h12" strokeWidth={3.500} />
    )}
  </Ico>
);
const Align = ({ d }: { d: string }) => (
  <Ico w={26} h={24}>
    <path d={d} strokeWidth={2.500} />
  </Ico>
);
const Bullets = () => (
  <Ico w={30} h={16}>
    <path {...solid} d="M0 0h6v6H0zM0 9h6v6H0z" />
    <path d="M9 3h21M9 12h21" strokeWidth={3} />
  </Ico>
);
const CodeGlyph = () => (
  <Ico w={27} h={16}>
    <path d="M10 2L3 8l7 6M17 2l7 6-7 6" strokeWidth={4} />
  </Ico>
);

/* ---------- Parts ---------- */

const favourites = ["收件匣 (60)", "VIP", "已傳送", "已加上旗標", "草稿 (1)"];

const Mail = () => (
  <MailWindow>
    <TitleRow>
      <Lights>
        {["關閉視窗", "縮小視窗", "放大視窗"].map((n) => (
          <Light key={n} aria-label={n} $fill="#dedede" $edge="#d0d0d0" />
        ))}
      </Lights>
      <WindowTitle $dim>收件匣 – john@avadesign.com.tw（12,981 封郵件，29 封未讀）</WindowTitle>
    </TitleRow>
    <MailToolbar>
      <MailGroup><MailButton $w={76} aria-label="取得郵件"><Envelope /></MailButton></MailGroup>
      <MailGroup><MailButton $w={76} aria-label="新郵件"><Compose /></MailButton></MailGroup>
      <MailGroup $push><MailButton $w={76} aria-label="封存"><Archive /></MailButton></MailGroup>
      <MailGroup>
        <MailButton $w={74} $faint aria-label="刪除"><Trash /></MailButton>
        <MailButton $w={74} $faint aria-label="垃圾郵件"><Junk /></MailButton>
      </MailGroup>
      <MailGroup>
        <MailButton $w={74} aria-label="回覆"><Reply /></MailButton>
        <MailButton $w={72} aria-label="全部回覆"><ReplyAll /></MailButton>
        <MailButton $w={74} aria-label="轉寄"><Forward /></MailButton>
      </MailGroup>
      <MailGroup>
        <MailButton $w={54} aria-label="旗標"><Flag /></MailButton>
        <MailButton $w={34} aria-label="旗標顏色"><Chevron /></MailButton>
      </MailGroup>
      <MailGroup><MailButton $w={326} $faint $start><MoveTo />搬移到⋯</MailButton></MailGroup>
      <MailSearch type="search" aria-label="搜尋" />
    </MailToolbar>
    <FavBar>
      <Fav $first><Panels />信箱</Fav>
      {favourites.map((f) => (
        <Fav key={f}>{f}<Chevron /></Fav>
      ))}
      <Fav $end>放</Fav>
    </FavBar>
    <MailBody>
      <MailSide>
        <SideHead>信箱</SideHead>
        <SideRow>
          <Ico w={18} h={16}><path d="M0 0h18L9 16z" {...solid} fill="#5c5c5c" /></Ico>
          <Inbox />收件匣
          <Badge><Ico w={12} h={12}><path d="M2 0v12M2 4l8 4" stroke="#eee" /></Ico></Badge>
        </SideRow>
        <SideRow $gap={57} $on />
        <SideRow $gap={102}><Closed /></SideRow>
        {[0, 1, 2, 3, 4, 5].map((n) => (
          <SideRow key={n}><Closed /></SideRow>
        ))}
        <SideRow $gap={8} $pad={18} $small>智</SideRow>
        <SideRow $gap={108} $pad={18} $small>我</SideRow>
        <SideRow $gap={266} $pad={18} $small>jo</SideRow>
        <SideRow $gap={96} $pad={36}><Folder w={38} h={29} />SumoMe contact form</SideRow>
        <SideRow $gap={12} $pad={18} $small>Google--a0937</SideRow>
      </MailSide>
      <MailList>
        <ListHead>
          <SortButton>按未讀的狀態排序<Chevron /></SortButton>
          <Filter />
        </ListHead>
        <Message $gap={7}>
          <Unread $size={18} />
          <Sender>friDay購物<When>上午11:28</When></Sender>
        </Message>
        <Message $gap={1219}>
          <Preview>數 5 這些公司的員工在留意您的檔案喔！ 1EP Test 所有搜尋 取消…</Preview>
        </Message>
        <Message $gap={7}>
          <Unread $size={18} />
          <Sender>IEK產業情報網<When>上午8:54</When></Sender>
          <Subject>IEK每日產業情報(2019-09-16)</Subject>
        </Message>
      </MailList>
      <Reader>
        <ReaderHead>
          <ReaderFrom><Star /><FromName>RapidWeaver Forums</FromName></ReaderFrom>
          <ReaderBox><Folder />收件…n.com.tw</ReaderBox>
          <time>上午11:20</time>
          <Avatar>RF</Avatar>
        </ReaderHead>
      </Reader>
    </MailBody>
  </MailWindow>
);

const settings: [string, React.ReactNode][] = [
  ["General", <Gear />],
  ["Web Icons", <Photo />],
  ["Advanced", <Sliders />],
  ["Privacy", <Shield />],
  ["Code", <Brackets />],
  ["Master Style", <Dropper />],
  ["Notes", <Note />],
  ["Publishing", <Cloud />],
];

const tests = (n: number) => Array(n).fill("test").join(" ");

const RapidWeaver = () => (
  <AppWindow>
    <AppHead>
      <TitleRow>
        <Lights>
          <Light aria-label="Close" $fill="#d2d2d2" $edge="#b4b4b4" />
          <Light aria-label="Minimize" $fill="#fdbc40" $edge="#e0a030" />
          <Light aria-label="Zoom" $fill="#35cd4b" $edge="#27a937" />
        </Lights>
        <WindowTitle><DocIcon />ava2019web</WindowTitle>
      </TitleRow>
      <Toolbar>
        <ToolSet>
          <Tool $w={77} $after={78}>
            <Face><FaceButton $w={77} aria-label="Add page"><Plus s={22} /><Down /></FaceButton></Face>Add
          </Tool>
          <Tool $w={86}><Face><FaceButton $w={77} aria-label="Open projects"><Box /></FaceButton></Face>Projects</Tool>
          <Tool $w={82}><Face><FaceButton $w={77} aria-label="Open themes"><Swatches /><Down /></FaceButton></Face>Themes</Tool>
          <Tool $w={110}><Face><FaceButton $w={77} aria-label="Open resources"><Pictures /></FaceButton></Face>Resources</Tool>
          <Tool $w={91}><Face><FaceButton $w={77} aria-label="Open snippets"><Snippet /></FaceButton></Face>Snippets</Tool>
        </ToolSet>
        <ToolSet>
          <Tool $w={204}>
            <Face>
              <FaceButton $w={101} aria-label="Edit mode"><Pencil /></FaceButton>
              <FaceButton $w={101} aria-label="Preview mode"><Eye /></FaceButton>
            </Face>
            Mode
          </Tool>
          <Tool $w={96}><Face><FaceButton $w={76} aria-label="Simulate device"><PhoneEye /><Down /></FaceButton></Face>Simulate</Tool>
        </ToolSet>
        <ToolSet $end>
          <Tool $w={77}><Face><FaceButton $w={77} aria-label="Open addons"><Plug /></FaceButton></Face>Addons</Tool>
          <Tool $w={76}><Face><FaceButton $w={76} aria-label="Check health"><Pulse /></FaceButton></Face>Health</Tool>
          <Tool $w={140}>
            <Face>
              <FaceButton $w={69} aria-label="Left panel"><PanelLeft /></FaceButton>
              <FaceButton $w={69} aria-label="Right panel"><PanelRight /></FaceButton>
            </Face>
            Inspector
          </Tool>
          <Tool $w={240}>
            <Face>
              <FaceButton $w={185}><CloudSolid />Publish</FaceButton>
              <FaceButton $w={55} aria-label="Publish options"><Ico w={15} h={8}><path d="M0 0h15L7.500 8z" {...solid} fill="#bbb" /></Ico></FaceButton>
            </Face>
            Vbellwebsite
          </Tool>
        </ToolSet>
      </Toolbar>
    </AppHead>
    <TabBar>
      <Tab>ava2019web</Tab>
      <NewTab aria-label="New tab"><Plus s={22} /></NewTab>
    </TabBar>
    <AppBody>
      <Sidebar>
        <Heading>Pages</Heading>
        <Item $on><Home />Home<Changed /></Item>
        <Item><Page />聯絡我<Changed /></Item>
        <Heading $next>Settings</Heading>
        {settings.map(([name, icon]) => (
          <Item key={name}>{icon}{name}</Item>
        ))}
      </Sidebar>
      <EditorPane>
        <Editor>
          <Selected>
            <Banner>愛台灣拼經濟!!!</Banner>
            <p>{tests(33)}</p>
            <p>{tests(14)}</p>
            <p>more text Heading 2</p>
            <p>{tests(14)}</p>
          </Selected>
          <LastLine>愛台灣</LastLine>
        </Editor>
        <FormatBar>
          <FormatGroup><FormatButton $w={81} $faint aria-label="Add link"><Link /></FormatButton></FormatGroup>
          <FormatGroup><FormatButton $w={81} $faint aria-label="Remove link"><Link cut /></FormatButton></FormatGroup>
          <FormatGroup>
            <FormatButton $w={69}><Bold>B</Bold></FormatButton>
            <FormatButton $w={66}><Slant>I</Slant></FormatButton>
            <FormatButton $w={68}><Under>U</Under></FormatButton>
          </FormatGroup>
          <FormatGroup><FormatButton $w={81}>A<UpDown /></FormatButton></FormatGroup>
          <FormatGroup>
            <FormatButton $w={70} $on aria-label="Align left"><Align d="M0 2h24M0 7h16M0 12h20M0 17h14M0 22h24" /></FormatButton>
            <FormatButton $w={65} aria-label="Align center"><Align d="M0 2h26M5 7h16M2 12h22M5 17h16M0 22h26" /></FormatButton>
            <FormatButton $w={68} aria-label="Align right"><Align d="M0 2h26M10 7h16M4 12h22M10 17h16M0 22h26" /></FormatButton>
          </FormatGroup>
          <FormatGroup><FormatButton $w={81} aria-label="List"><Bullets /></FormatButton></FormatGroup>
          <FormatGroup><FormatButton $w={81} aria-label="Code style"><CodeGlyph /><UpDown /></FormatButton></FormatGroup>
          <FormatGroup><FormatButton $w={81} aria-label="Text colour"><ColorWheel /></FormatButton></FormatGroup>
        </FormatBar>
      </EditorPane>
    </AppBody>
    <Sheet role="dialog" aria-labelledby="sheet-title">
      <SheetTitle id="sheet-title">Couldn’t upload to your AWS S3 server</SheetTitle>
      <Progress value={1} max={1} aria-labelledby="sheet-title" />
      <Log>
        <LogRow>Couldn’t upload to your AWS S3 server<InfoButton aria-label="Details">i</InfoButton></LogRow>
        {[1, 2, 3, 4, 5].map((n) => (
          <LogRow key={n}>Idle</LogRow>
        ))}
      </Log>
      <SheetFoot>
        <Help>?</Help>
        <Done>Done</Done>
      </SheetFoot>
    </Sheet>
  </AppWindow>
);

export default function App() {
  return (
    <>
      <GlobalStyle />
      <Desktop>
        <MenuBar>
          <Menus>
            <MenuTitle aria-label="Apple menu"><Apple /></MenuTitle>
            <MenuTitle $strong>RapidWeaver 8</MenuTitle>
            {["File", "Edit", "Format", "View", "Window", "Help"].map((m) => (
              <MenuTitle key={m}>{m}</MenuTitle>
            ))}
          </Menus>
          <Status>
            <StatusItem $w={58} aria-label="Flame"><Flame /></StatusItem>
            <StatusItem $w={60}><Line /></StatusItem>
            <StatusItem $w={56} aria-label="WeChat"><WeChat /></StatusItem>
            <StatusItem $w={88}><Penguin />29</StatusItem>
            <StatusItem $w={68} aria-label="TeamViewer"><TeamViewer /></StatusItem>
            <StatusItem $w={38} aria-label="Bookmarks"><Bookmark /></StatusItem>
            <StatusItem $w={54} aria-label="Shapes"><Blocks /></StatusItem>
            <StatusItem $w={76} aria-label="Picture"><Bronze /></StatusItem>
            <StatusItem $w={70}><Coin /></StatusItem>
            <StatusItem $w={52} aria-label="Window tiles"><Tiles /></StatusItem>
            <StatusItem $w={56} aria-label="Drive"><Drive /></StatusItem>
            <StatusItem $w={56} aria-label="AirPlay"><AirPlay /></StatusItem>
            <StatusItem $w={66} aria-label="Bluetooth"><Bluetooth /></StatusItem>
            <StatusItem $w={54} aria-label="Wi-Fi"><Wifi /></StatusItem>
            <StatusItem $w={132}><Small>71%</Small><Battery /></StatusItem>
            <StatusItem $w={60}><InputSource /></StatusItem>
            <StatusItem $w={228}>週一 上午11:29</StatusItem>
            <StatusItem $w={72} aria-label="Search"><Search /></StatusItem>
            <StatusItem $w={56} aria-label="Notification Center"><ListMenu /></StatusItem>
          </Status>
        </MenuBar>
        <Mail />
        <RapidWeaver />
        <Notice>
          <NoticeMain>
            <AppIcon />
            <NoticeText>
              <NoticeTitle>Unable to Publish</NoticeTitle>
              <p>There was a problem publishing your</p>
              <p>website. Please check that your publis...</p>
            </NoticeText>
          </NoticeMain>
          <NoticeActions>
            <NoticeButton>關閉</NoticeButton>
            <NoticeButton>顯示</NoticeButton>
          </NoticeActions>
        </Notice>
      </Desktop>
    </>
  );
}
